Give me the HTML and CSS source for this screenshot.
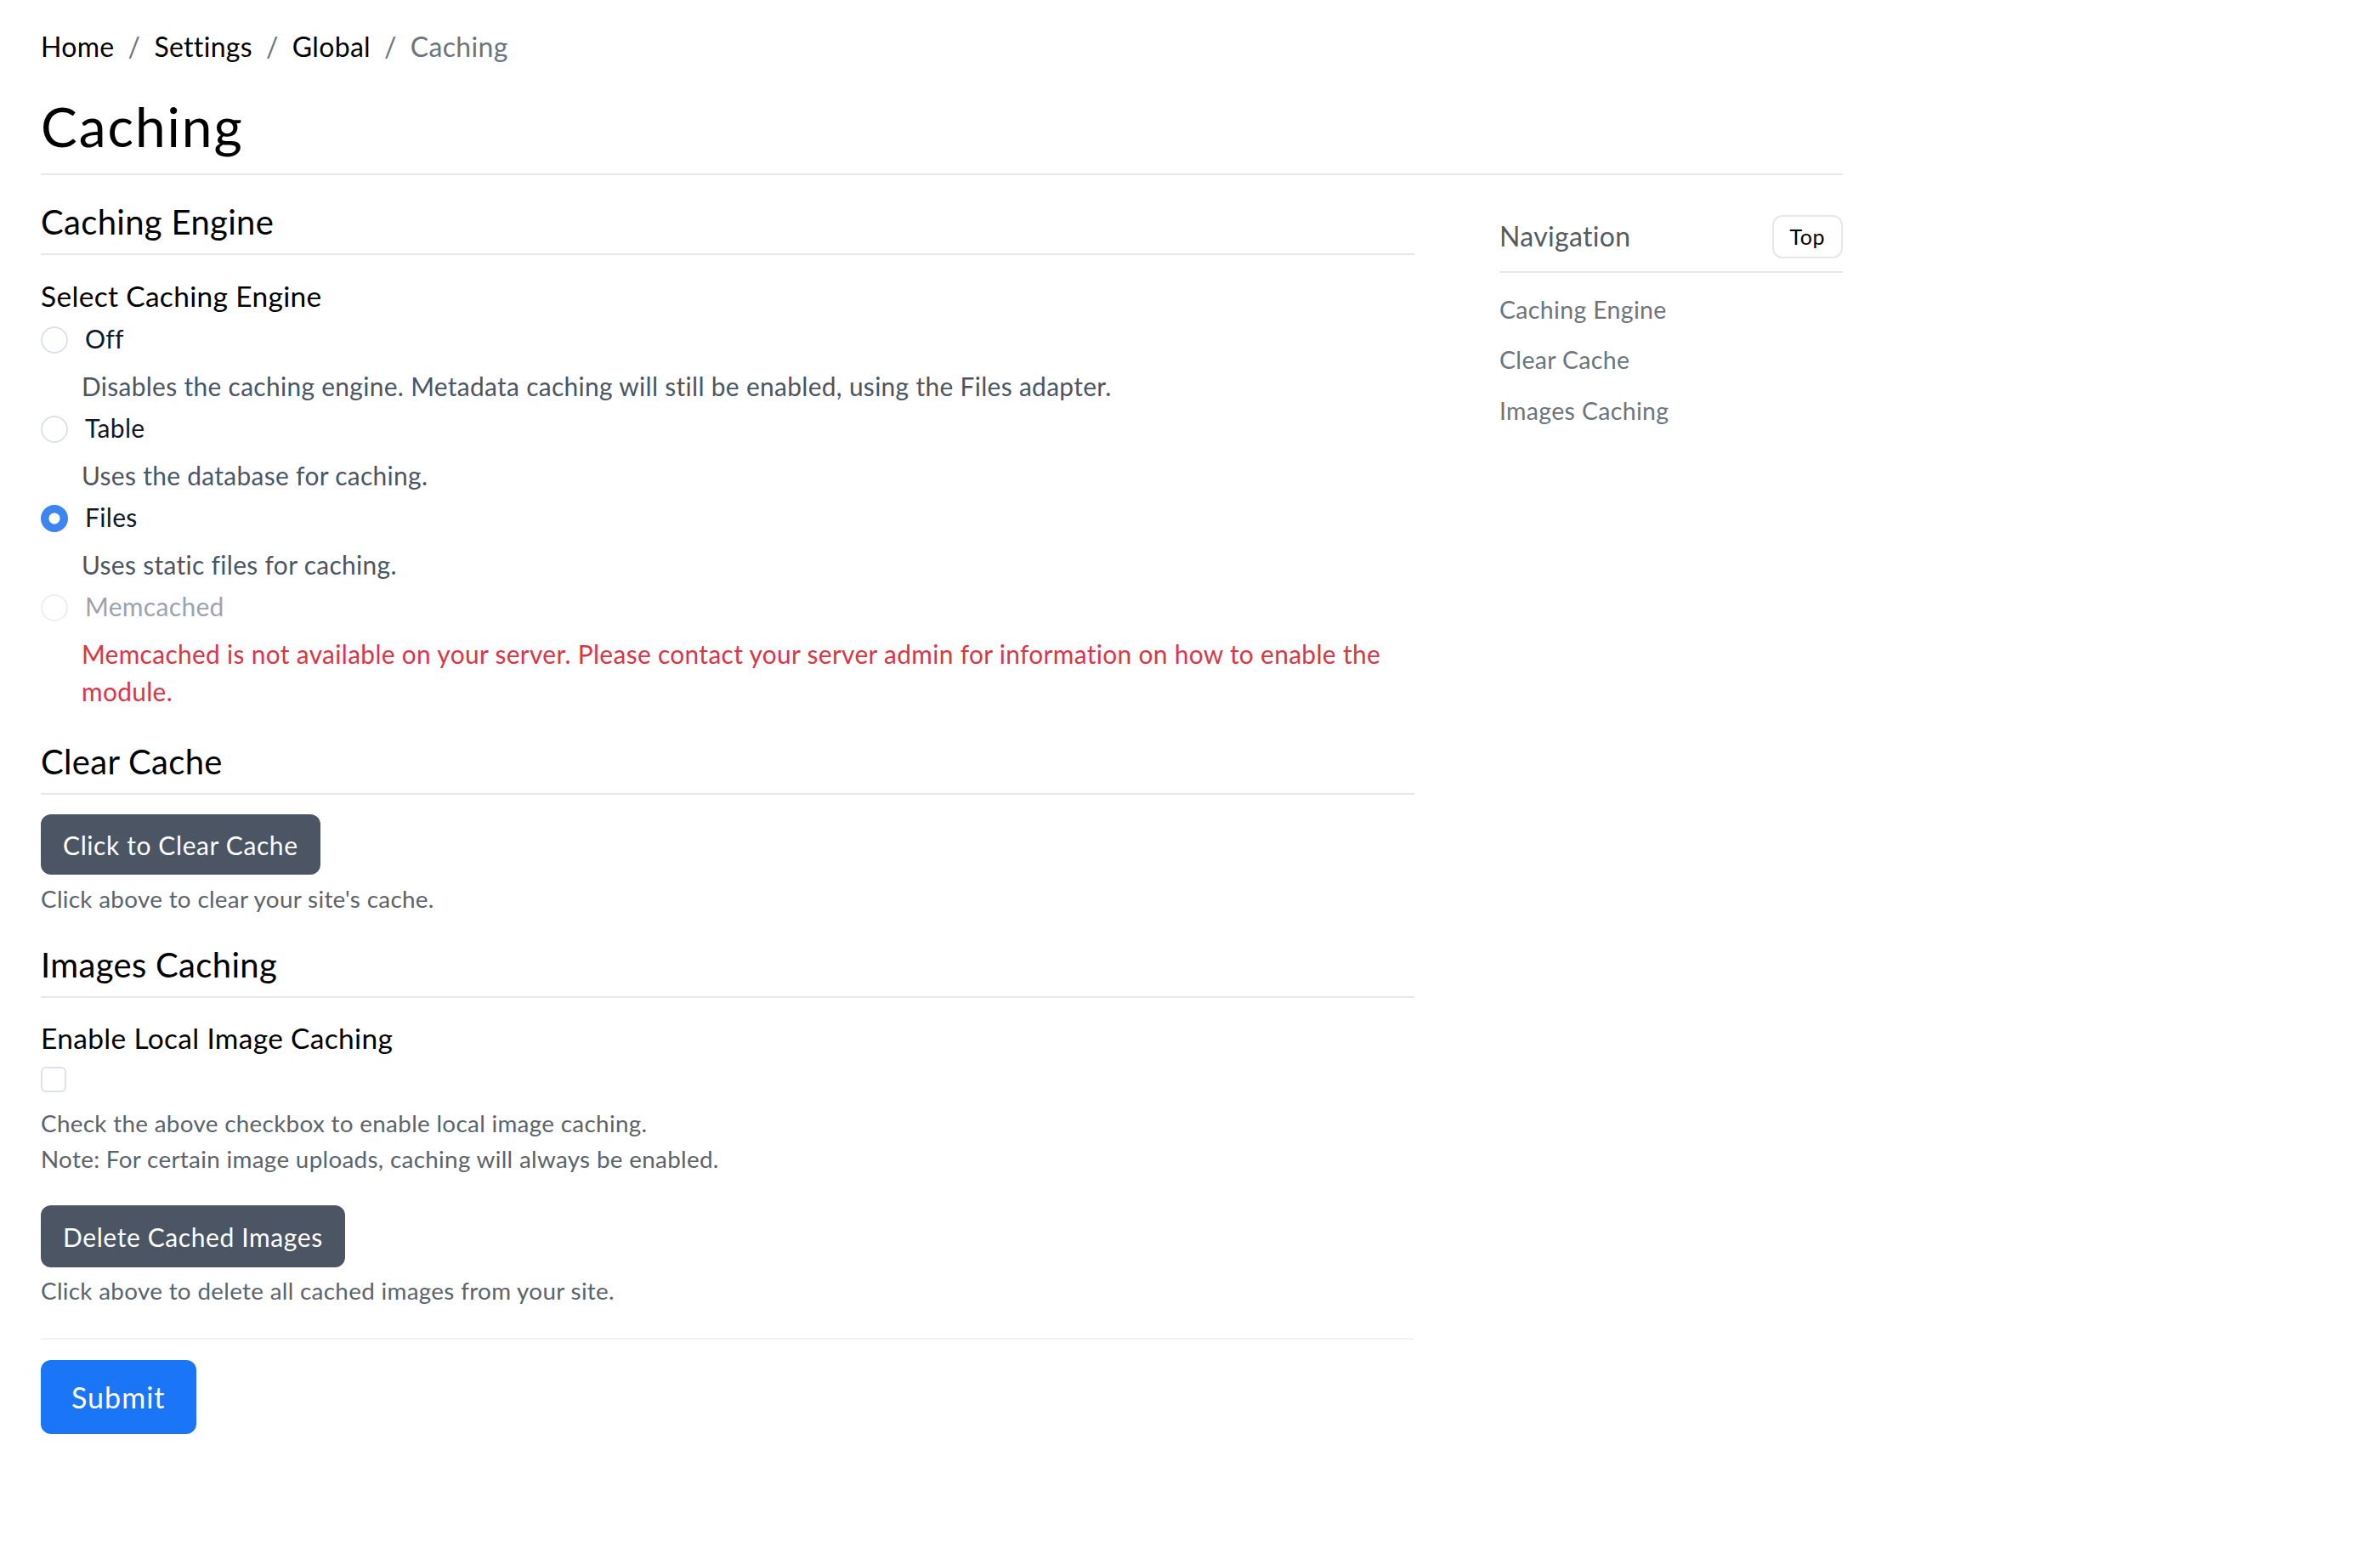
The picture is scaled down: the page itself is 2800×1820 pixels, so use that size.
FILE: index.html
```html
<!DOCTYPE html>
<html lang="en">
<head>
<meta charset="utf-8">
<title>Caching</title>
<link rel="stylesheet" href="styles.css">
</head>
<body>
<div class="page">

  <nav class="crumbs">
    <a href="#">Home</a><span class="sep">/</span>
    <a href="#">Settings</a><span class="sep">/</span>
    <a href="#">Global</a><span class="sep">/</span>
    <span class="current">Caching</span>
  </nav>

  <h1 class="title">Caching</h1>

  <div class="layout">
    <form class="main" action="#" method="post">

      <section class="sec sec-engine" id="caching-engine">
        <h2 class="sec-head">Caching Engine</h2>
        <div class="field-label">Select Caching Engine</div>

        <label class="choice-row"><input type="radio" name="engine" value="off"> Off</label>
        <p class="choice-desc">Disables the caching engine. Metadata caching will still be enabled, using the Files adapter.</p>

        <label class="choice-row"><input type="radio" name="engine" value="table"> Table</label>
        <p class="choice-desc">Uses the database for caching.</p>

        <label class="choice-row"><input type="radio" name="engine" value="files" checked> Files</label>
        <p class="choice-desc">Uses static files for caching.</p>

        <label class="choice-row disabled"><input type="radio" name="engine" value="memcached" disabled> Memcached</label>
        <p class="choice-desc error">Memcached is not available on your server. Please contact your server admin for information on how to enable the module.</p>
      </section>

      <section class="sec sec-clear" id="clear-cache">
        <h2 class="sec-head">Clear Cache</h2>
        <button type="button" class="btn-dark btn-clear">Click to Clear Cache</button>
        <p class="help help-clear">Click above to clear your site's cache.</p>
      </section>

      <section class="sec sec-images" id="images-caching">
        <h2 class="sec-head">Images Caching</h2>
        <div class="field-label label-images">Enable Local Image Caching</div>
        <input type="checkbox" class="check" name="local_images">
        <p class="help help-check">Check the above checkbox to enable local image caching.<br>Note: For certain image uploads, caching will always be enabled.</p>
        <button type="button" class="btn-dark btn-delete">Delete Cached Images</button>
        <p class="help help-delete">Click above to delete all cached images from your site.</p>
      </section>

      <div class="actions">
        <button type="submit" class="btn-submit">Submit</button>
      </div>
    </form>

    <aside class="side">
      <div class="side-head">
        <span class="side-title">Navigation</span>
        <button type="button" class="btn-top">Top</button>
      </div>
      <ul class="side-links">
        <li><a href="#caching-engine">Caching Engine</a></li>
        <li><a href="#clear-cache">Clear Cache</a></li>
        <li><a href="#images-caching">Images Caching</a></li>
      </ul>
    </aside>
  </div>

</div>
</body>
</html>
```

FILE: styles.css
```css
body {
  margin: 0;
  font-family: Lato, "Open Sans", sans-serif;
  letter-spacing: 0.02em;
  color: #111;
  background: #fff;
}
a {
  color: inherit;
  text-decoration: none;
}
.page {
  width: 2120px;
  padding: 31px 0 60px 48px;
}

/* breadcrumb + title */
.crumbs {
  display: flex;
  font-size: 32px;
  line-height: 48px;
}
.crumbs a {
  color: #000;
}
.crumbs .sep {
  color: #6c757d;
  padding: 0 16px;
}
.crumbs .current {
  color: #6c757d;
}
.title {
  margin: 31px 0 0;
  padding-bottom: 17px;
  font-size: 64px;
  line-height: 77px;
  font-weight: 400;
  letter-spacing: 0.03em;
  color: #000;
  border-bottom: 2px solid #e5e7eb;
}

.layout {
  display: grid;
  grid-template-columns: 1616px 404px;
  column-gap: 100px;
  align-items: start;
}

/* sections */
.sec {
  display: flow-root;
}
.sec-engine {
  margin-top: 30.5px;
}
.sec-clear {
  margin-top: 37px;
}
.sec-images {
  margin-top: 32px;
}
.sec-head {
  margin: 0;
  padding-bottom: 13px;
  font-size: 40px;
  line-height: 48px;
  font-weight: 400;
  color: #000;
  border-bottom: 2px solid #e5e7eb;
}
.field-label {
  margin: 24.5px 0 4px;
  font-size: 33.5px;
  line-height: 48px;
  color: #000;
}
.label-images {
  margin: 23px 0 0;
}

/* radios */
.choice-row {
  display: flex;
  align-items: flex-start;
  gap: 20px;
  font-size: 30px;
  line-height: 45px;
  color: #111827;
}
.choice-row input {
  appearance: none;
  flex: none;
  width: 32px;
  height: 32px;
  margin: 8px 0 0;
  border: 2px solid #dee2e6;
  border-radius: 50%;
  background: #fff;
}
.choice-row input:checked {
  border-color: #3d85f0;
  background: radial-gradient(circle, #fff 0 6px, #3d85f0 7px);
}
.choice-row.disabled {
  color: #9ca3af;
}
.choice-row.disabled input {
  border-color: #eceef0;
}
.choice-desc {
  margin: 10.7px 0 5.3px 48px;
  font-size: 29.9px;
  line-height: 44px;
  color: #4b5563;
}
.choice-desc.error {
  margin-bottom: 0;
  color: #dc3545;
}

/* buttons and help */
.btn-dark {
  display: block;
  padding: 12.5px 26px;
  border: 0;
  border-radius: 12px;
  background: #4b5563;
  color: #fff;
  font-family: inherit;
  font-size: 30px;
  line-height: 46px;
  letter-spacing: 0.02em;
  cursor: pointer;
}
.btn-clear {
  margin-top: 23.5px;
}
.btn-delete {
  margin-top: 33.3px;
  padding: 13.5px 26px;
}
.help {
  margin: 0;
  font-size: 27.8px;
  line-height: 42px;
  color: #5c636a;
}
.help-clear {
  margin-top: 7.4px;
}
.help-check {
  margin-top: 15.9px;
}
.help-delete {
  margin-top: 7.2px;
}
.check {
  appearance: none;
  display: block;
  width: 30px;
  height: 30px;
  margin: 10.4px 0 0;
  border: 2px solid #dee2e6;
  border-radius: 6px;
  background: #fff;
}

.actions {
  margin-top: 34.2px;
  padding-top: 23.6px;
  border-top: 2px solid #f1f1f3;
}
.btn-submit {
  padding: 18px 36px;
  border: 0;
  border-radius: 12px;
  background: #1a76f6;
  color: #fff;
  font-family: inherit;
  font-size: 34px;
  line-height: 51px;
  letter-spacing: 0.03em;
  cursor: pointer;
}

/* sidebar */
.side {
  margin-top: 46.7px;
}
.side-head {
  display: flex;
  align-items: center;
  justify-content: space-between;
  padding-bottom: 15px;
  border-bottom: 2px solid #e5e7eb;
}
.side-title {
  font-size: 32px;
  line-height: 48px;
  color: #555b61;
}
.btn-top {
  padding: 8.5px 19px;
  border: 2px solid #e5e7eb;
  border-radius: 12px;
  background: #fff;
  color: #000;
  font-family: inherit;
  font-size: 25px;
  line-height: 30px;
  letter-spacing: 0.02em;
}
.side-links {
  list-style: none;
  margin: 0;
  padding: 13.5px 0 0;
}
.side-links a {
  display: block;
  padding: 8.7px 0;
  font-size: 28.5px;
  line-height: 42px;
  color: #6c757d;
}
```
